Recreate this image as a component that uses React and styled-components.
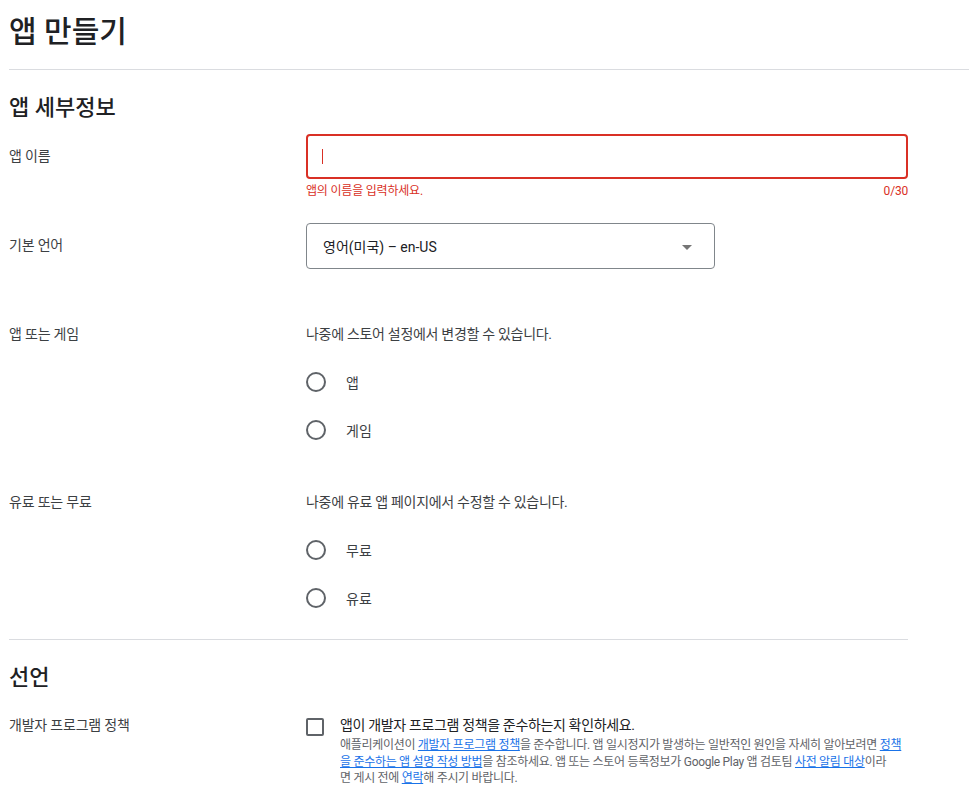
import React from 'react'
import styled, { createGlobalStyle } from 'styled-components'

const GlobalStyle = createGlobalStyle`
  html, body {
    margin: 0;
    padding: 0;
    background: #fff;
  }
  body {
    font-family: Roboto, "Noto Sans CJK KR", "Noto Sans", sans-serif;
    color: #202124;
    -webkit-font-smoothing: antialiased;
  }
`

const Page = styled.div`
  padding-left: 9px;
  width: 960px;
`

const Title = styled.h1`
  margin: 0;
  padding-top: 12px;
  font-size: 30px;
  line-height: 40px;
  font-weight: 500;
  color: #202124;
  padding-bottom: 17px;
  border-bottom: 1px solid #dadce0;
`

const Section = styled.section`
  width: 899px;
  padding-top: 22px;
  ${p => p.$divider && 'border-bottom: 1px solid #dadce0; padding-bottom: 17px;'}
`

const SectionTitle = styled.h2`
  margin: 0 0 ${p => p.$gap || 10}px;
  font-size: 22px;
  line-height: 32px;
  font-weight: 500;
  color: #202124;
`

const Row = styled.div`
  display: grid;
  grid-template-columns: 297px 1fr;
  margin-top: ${p => p.$top || 0}px;
`

const Label = styled.div`
  font-size: 14px;
  line-height: 20px;
  letter-spacing: -0.2px;
  color: #3c4043;
  padding-top: ${p => p.$pad || 0}px;
`

const Field = styled.div`
  display: flex;
  flex-direction: column;
`

const InputBox = styled.div`
  height: 45px;
  box-sizing: border-box;
  border: 2px solid #d93025;
  border-radius: 4px;
  display: flex;
  align-items: center;
  padding-left: 14px;
`

const Caret = styled.span`
  width: 1px;
  height: 15px;
  background: #d93025;
`

const Helper = styled.div`
  display: flex;
  justify-content: space-between;
  margin-top: 4px;
  font-size: 12px;
  line-height: 16px;
  letter-spacing: -0.2px;
  color: #d93025;
`

const Select = styled.div`
  width: 409px;
  height: 46px;
  box-sizing: border-box;
  border: 1px solid #80868b;
  border-radius: 4px;
  display: flex;
  align-items: center;
  justify-content: space-between;
  padding: 0 22px 0 16px;
  font-size: 14px;
  color: #202124;
`

const Arrow = styled.span`
  width: 0;
  height: 0;
  border-left: 5px solid transparent;
  border-right: 5px solid transparent;
  border-top: 5px solid #757575;
  margin-top: 2px;
`

const Description = styled.div`
  font-size: 14px;
  line-height: 20px;
  letter-spacing: -0.3px;
  color: #3c4043;
  margin-bottom: 14px;
`

const RadioItem = styled.label`
  display: flex;
  align-items: center;
  height: 48px;
  font-size: 14px;
  color: #3c4043;
`

const RadioCircle = styled.span`
  width: 20px;
  height: 20px;
  box-sizing: border-box;
  border: 2px solid #5f6368;
  border-radius: 50%;
  margin-right: 20px;
`

const CheckRow = styled.div`
  display: flex;
  align-items: flex-start;
`

const CheckBox = styled.span`
  flex: none;
  width: 18px;
  height: 18px;
  box-sizing: border-box;
  border: 2px solid #5f6368;
  border-radius: 2px;
  margin-top: 3px;
  margin-right: 16px;
`

const CheckText = styled.div`
  font-size: 14px;
  line-height: 20px;
  letter-spacing: -0.35px;
  color: #202124;
`

const Small = styled.div`
  margin-top: 2px;
  font-size: 12px;
  line-height: 16.5px;
  letter-spacing: -0.3px;
  color: #5f6368;
  white-space: nowrap;
`

const Link = styled.a`
  color: #1a73e8;
  text-decoration: underline;
`

function RadioGroup({ description, options }) {
  return (
    <Field>
      <Description>{description}</Description>
      {options.map(o => (
        <RadioItem key={o}>
          <RadioCircle />
          {o}
        </RadioItem>
      ))}
    </Field>
  )
}

export default function App() {
  return (
    <Page>
      <GlobalStyle />
      <Title>앱 만들기</Title>

      <Section $divider>
        <SectionTitle>앱 세부정보</SectionTitle>
        <Row>
          <Label $pad={12}>앱 이름</Label>
          <Field>
            <InputBox>
              <Caret />
            </InputBox>
            <Helper>
              <span>앱의 이름을 입력하세요.</span>
              <span>0/30</span>
            </Helper>
          </Field>
        </Row>
        <Row $top={24}>
          <Label $pad={12}>기본 언어</Label>
          <Select>
            <span>영어(미국) – en-US</span>
            <Arrow />
          </Select>
        </Row>
        <Row $top={55}>
          <Label>앱 또는 게임</Label>
          <RadioGroup
            description="나중에 스토어 설정에서 변경할 수 있습니다."
            options={['앱', '게임']}
          />
        </Row>
        <Row $top={38}>
          <Label>유료 또는 무료</Label>
          <RadioGroup
            description="나중에 유료 앱 페이지에서 수정할 수 있습니다."
            options={['무료', '유료']}
          />
        </Row>
      </Section>

      <Section>
        <SectionTitle $gap={21}>선언</SectionTitle>
        <Row>
          <Label>개발자 프로그램 정책</Label>
          <CheckRow>
            <CheckBox />
            <div>
              <CheckText>앱이 개발자 프로그램 정책을 준수하는지 확인하세요.</CheckText>
              <Small>
                애플리케이션이 <Link>개발자 프로그램 정책</Link>을 준수합니다. 앱 일시정지가 발생하는 일반적인 원인을 자세히 알아보려면{' '}
                <Link>정책<br />을 준수하는 앱 설명 작성 방법</Link>을 참조하세요. 앱 또는 스토어 등록정보가 Google Play 앱 검토팀{' '}
                <Link>사전 알림 대상</Link>이라<br />면 게시 전에 <Link>연락</Link>해 주시기 바랍니다.
              </Small>
            </div>
          </CheckRow>
        </Row>
      </Section>
    </Page>
  )
}
